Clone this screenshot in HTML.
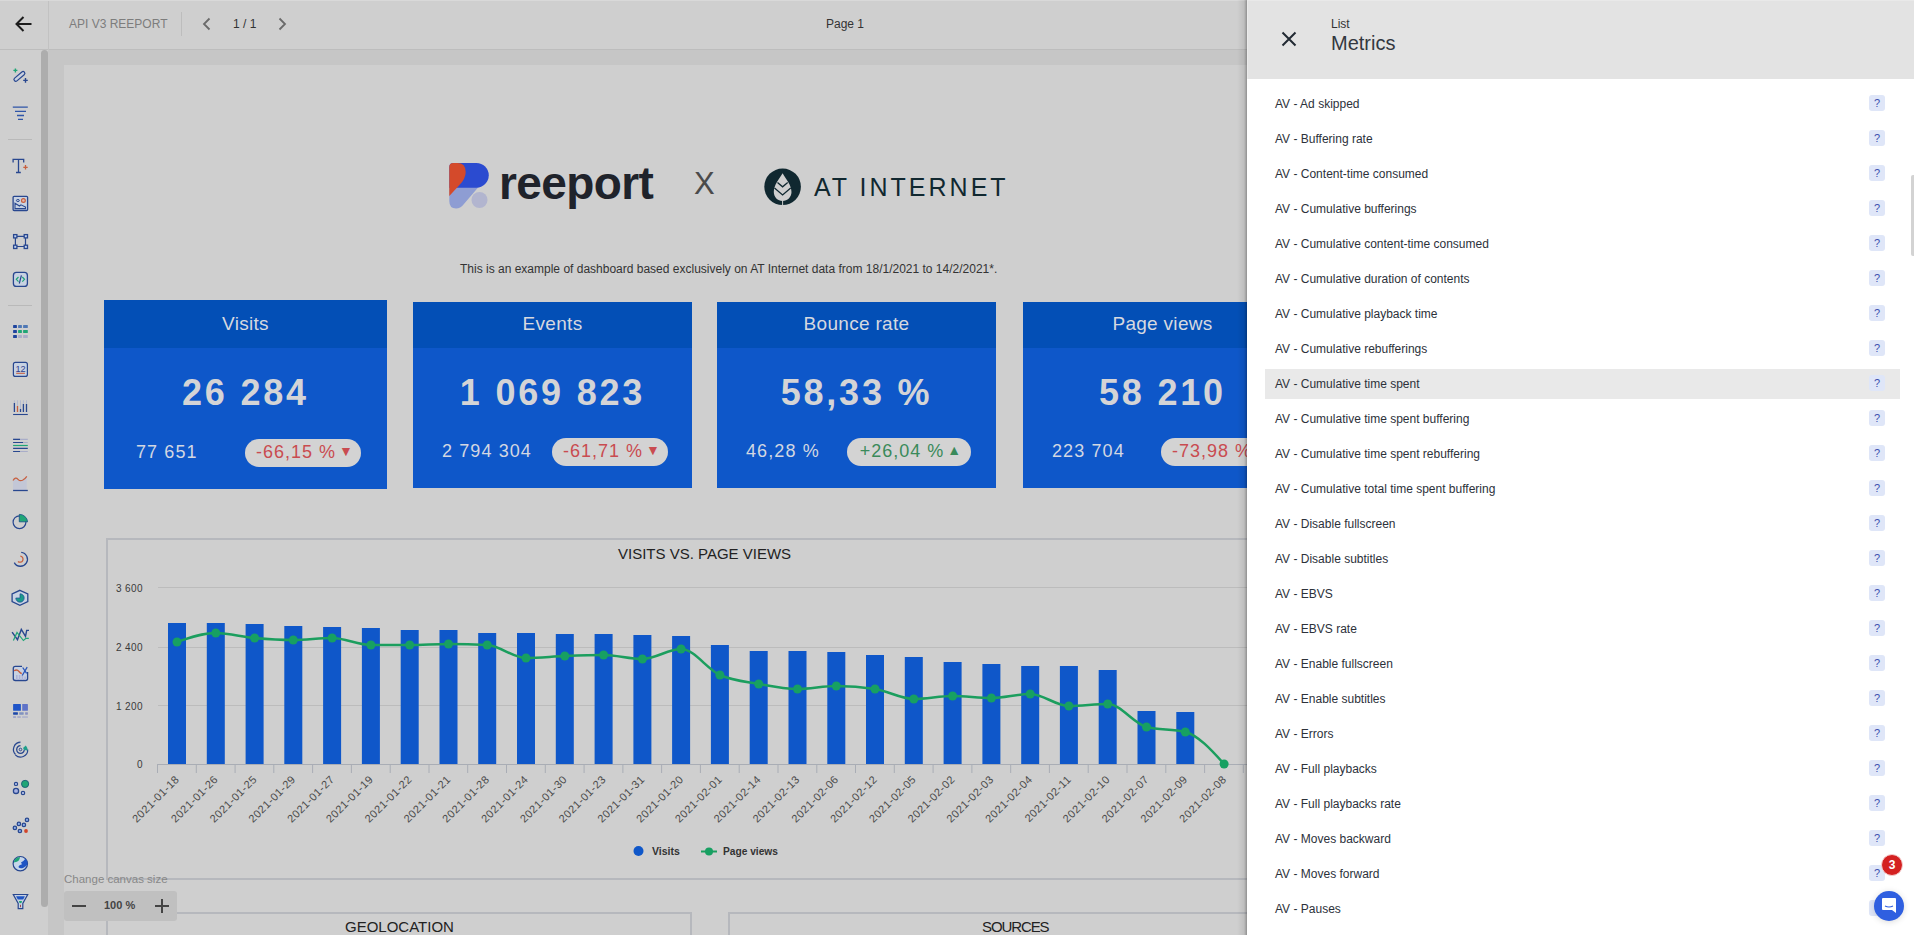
<!DOCTYPE html>
<html><head><meta charset="utf-8">
<style>
*{margin:0;padding:0;box-sizing:border-box}
html,body{width:1914px;height:935px;overflow:hidden;background:#cfcfcf;font-family:"Liberation Sans",sans-serif;position:relative}
.abs{position:absolute}
.card{position:absolute;top:302px;height:186px;background:#0e57c9;color:#d6d9e0}
.card .hd{position:absolute;left:0;top:0;right:0;height:46px;background:#034fb6;font-size:19px;text-align:center;line-height:47px;letter-spacing:0.3px}
.card .big{position:absolute;left:0;right:0;top:68px;text-align:center;font-size:36px;font-weight:bold;color:#d4d4d6;letter-spacing:2.8px}
.card .sub{position:absolute;top:141px;font-size:18px;color:#d3d7e2;letter-spacing:1.1px}
.card .pill{position:absolute;top:136px;height:28px;border-radius:14px;background:#d3d3d3;font-size:18px;line-height:25px;text-align:center;letter-spacing:1px;padding-left:3px}
.red{color:#c94b50}.grn{color:#3a8a5a}
.tri{font-size:14px;vertical-align:1.5px;letter-spacing:0;margin-left:3px}
.item{position:absolute;left:1265px;width:635px;height:30px;font-size:12px;color:#2c313a;line-height:30px;padding-left:10px}
.q{position:absolute;left:1869px;width:16px;height:16px;border-radius:3px;background:#dfe6f8;color:#3d4fae;font-size:11px;text-align:center;line-height:16px}
</style></head><body>
<!-- header -->
<div class="abs" style="left:0;top:0;width:1247px;height:50px;background:#cfcfcf;border-bottom:1px solid #bdbdbd"></div>
<div class="abs" style="left:48px;top:0;width:1px;height:50px;background:#c2c2c2"></div>
<svg class="abs" style="left:14px;top:14px" width="20" height="20" viewBox="0 0 20 20"><path d="M17.5 10H3 M9.5 3 L2.5 10 L9.5 17" fill="none" stroke="#1c1c1c" stroke-width="2"/></svg>
<div class="abs" style="left:69px;top:17px;font-size:12px;color:#7d7d7d">API V3 REEPORT</div>
<div class="abs" style="left:181px;top:12px;width:1px;height:24px;background:#bdbdbd"></div>
<svg class="abs" style="left:199.5px;top:15.5px" width="14" height="16" viewBox="0 0 14 16"><path d="M9.5 2.5 L4 8 L9.5 13.5" fill="none" stroke="#6a6a6a" stroke-width="1.8"/></svg>
<div class="abs" style="left:233px;top:17px;font-size:12px;color:#333">1 / 1</div>
<svg class="abs" style="left:275px;top:15.5px" width="14" height="16" viewBox="0 0 14 16"><path d="M4.5 2.5 L10 8 L4.5 13.5" fill="none" stroke="#6a6a6a" stroke-width="1.8"/></svg>
<div class="abs" style="left:826px;top:17px;font-size:12px;color:#333">Page 1</div>

<div class="abs" style="left:0;top:0;width:1247px;height:1px;background:#d9d9d9"></div>
<!-- sidebar -->
<div class="abs" style="left:0;top:50px;width:48px;height:885px;background:#cfcfcf"></div>
<div class="abs" style="left:41px;top:50px;width:7px;height:857px;background:#adadad;border-radius:3.5px"></div>
<div class="abs" style="left:8px;top:139px;width:24px;height:1px;background:#b9b9b9"></div>
<div class="abs" style="left:8px;top:305px;width:24px;height:1px;background:#b9b9b9"></div>

<!-- canvas -->
<div class="abs" style="left:48px;top:50px;width:1199px;height:885px;background:#c6c6c6"></div>
<div class="abs" style="left:64px;top:65px;width:1183px;height:870px;background:#cfcfcf"></div>
<!-- sidebar icons -->
<svg class="abs" style="left:8px;top:64px" width="24" height="24" viewBox="0 0 24 24" fill="none"><path d="M5.4,6.4 H9.4 M7.4,4.4 V8.4" stroke="#20a676" stroke-width="1.4"/>
<rect x="-6.55" y="-1.8" width="13.1" height="3.6" rx="1.8" transform="translate(11.4,12.45) rotate(-40.4)" stroke="#28478f" stroke-width="1.2" fill="#c9d0df"/>
<path d="M15.2,16.4 H19.8 M17.5,14.1 V18.7" stroke="#28478f" stroke-width="1.4"/></svg>
<svg class="abs" style="left:8px;top:101px" width="24" height="24" viewBox="0 0 24 24" fill="none"><path d="M4.8,6.2 H19.8 M7,10.4 H18 M9,14.5 H16 M10,18.4 H15" stroke="#2f55a8" stroke-width="1.3"/></svg>
<svg class="abs" style="left:8px;top:154px" width="24" height="24" viewBox="0 0 24 24" fill="none"><path d="M5.1,8.5 V5.4 H15.7 V8.5 M10.5,5.4 V18.5 M8,18.5 H12.8" stroke="#28478f" stroke-width="1.3" fill="none"/>
<path d="M15.3,13.3 H19.7 M17.5,11.1 V15.5" stroke="#c8603e" stroke-width="1.3"/></svg>
<svg class="abs" style="left:8px;top:191px" width="24" height="24" viewBox="0 0 24 24" fill="none"><rect x="5.1" y="5.3" width="14.5" height="14.2" rx="1" stroke="#28478f" stroke-width="1.3" fill="#c8d2e2"/>
<ellipse cx="9.9" cy="9.5" rx="1.5" ry="1" stroke="#28478f" stroke-width="1" fill="none"/>
<circle cx="15.4" cy="9.5" r="1.9" stroke="#c8603e" stroke-width="1.2" fill="#e3b8b0"/>
<path d="M7,12.3 L11.5,15 L13,13.8 L17.5,16 V17.6 H7 Z" stroke="#28478f" stroke-width="1.1" fill="none"/></svg>
<svg class="abs" style="left:8px;top:229px" width="24" height="24" viewBox="0 0 24 24" fill="none"><path d="M8.8,7.4 H16.2 M8.8,17.5 H16.2 M7.4,8.8 V16 M17.5,8.8 V16" stroke="#28478f" stroke-width="1.2"/>
<g stroke="#28478f" stroke-width="1.3" fill="#bfd0ee"><rect x="5.6" y="5.6" width="3.3" height="3.3"/><rect x="16.2" y="5.6" width="3.3" height="3.3"/><rect x="5.6" y="16.2" width="3.3" height="3.3"/><rect x="16.2" y="16.2" width="3.3" height="3.3"/></g></svg>
<svg class="abs" style="left:8px;top:267px" width="24" height="24" viewBox="0 0 24 24" fill="none"><rect x="5.4" y="5.4" width="14" height="14" rx="3" stroke="#28478f" stroke-width="1.3" fill="#c8d2e2"/>
<path d="M10.5,10 L8.3,12.3 L10.5,14.6 M14.3,10 L16.5,12.3 L14.3,14.6" stroke="#20a676" stroke-width="1.2" fill="none"/>
<path d="M13.4,8.3 L11.3,16.5" stroke="#28478f" stroke-width="1.2"/></svg>
<svg class="abs" style="left:8px;top:319px" width="24" height="24" viewBox="0 0 24 24" fill="none"><g><rect x="5.1" y="6" width="3.8" height="2.9" rx="0.5" fill="#1e449e"/><rect x="10.1" y="6" width="3.8" height="2.9" rx="0.5" fill="#4f78b5"/><rect x="15.1" y="6" width="4.7" height="2.9" rx="0.5" fill="#4f78b5"/>
<rect x="5.1" y="11" width="3.8" height="2.9" rx="0.5" fill="#1e449e"/><rect x="10.1" y="11" width="3.8" height="2.9" rx="0.5" fill="#20a676"/><rect x="15.1" y="11" width="4.7" height="2.9" rx="0.5" fill="#20a676"/>
<rect x="5.1" y="16" width="3.8" height="2.9" rx="0.5" fill="#1e449e"/><rect x="10.1" y="16" width="3.8" height="2.9" rx="0.5" fill="#a9adc8"/><rect x="15.1" y="16" width="4.7" height="2.9" rx="0.5" fill="#a9adc8"/></g></svg>
<svg class="abs" style="left:8px;top:357px" width="24" height="24" viewBox="0 0 24 24" fill="none"><rect x="5.4" y="5.4" width="14" height="14" rx="2" stroke="#28478f" stroke-width="1.2" fill="#c8d2e2"/>
<text x="12.6" y="14.8" text-anchor="middle" font-family="Liberation Sans" font-size="9.2" fill="#30418f">12</text>
<path d="M8.2,16.3 H16.9" stroke="#c8603e" stroke-width="1.1"/></svg>
<svg class="abs" style="left:8px;top:395px" width="24" height="24" viewBox="0 0 24 24" fill="none"><path d="M6.4,5.3 V17 M9.5,5.3 V17 M12.5,5.3 V17 M15.4,5.3 V17 M18.5,5.3 V17" stroke="#b3bad0" stroke-width="1"/>
<path d="M6.4,8 V17 M12.5,14 V17 M15.4,9 V17 M18.5,9 V17" stroke="#28478f" stroke-width="1.3"/>
<path d="M9.5,11 V17" stroke="#c8603e" stroke-width="1.3"/>
<path d="M5.1,19.5 H19.8" stroke="#28478f" stroke-width="1.1"/></svg>
<svg class="abs" style="left:8px;top:433px" width="24" height="24" viewBox="0 0 24 24" fill="none"><path d="M5.1,6.4 H19.8 M5.1,9.5 H19.8 M5.1,18.5 H19.8" stroke="#a9adc8" stroke-width="1.1"/>
<path d="M5.1,6.4 H12 M5.1,9.5 H15 M5.1,15.4 H19.8 M5.1,18.5 H12" stroke="#28478f" stroke-width="1.2"/>
<path d="M5.1,12.5 H19.8" stroke="#20a676" stroke-width="1.2"/></svg>
<svg class="abs" style="left:8px;top:471px" width="24" height="24" viewBox="0 0 24 24" fill="none"><path d="M5,9.5 Q7.5,5.5 10,8.3 Q12,10.5 14.5,9.3 Q17,8 18.8,5.3 V19 H5 Z" fill="#c3c7d6"/>
<path d="M5,9.5 Q7.5,5.5 10,8.3 Q12,10.5 14.5,9.3 Q17,8 18.8,5.3" stroke="#c8603e" stroke-width="1.2" fill="none"/>
<path d="M5.1,19.5 H19.8" stroke="#28478f" stroke-width="1.3"/></svg>
<svg class="abs" style="left:8px;top:509px" width="24" height="24" viewBox="0 0 24 24" fill="none"><circle cx="11.5" cy="13.2" r="6.4" stroke="#28478f" stroke-width="1.2" fill="none"/>
<path d="M11.3,12.8 V5.4 A8.2,8.2 0 0 1 19.6,12.8 Z" fill="#20a676" stroke="#1b5a86" stroke-width="0.9"/></svg>
<svg class="abs" style="left:8px;top:547px" width="24" height="24" viewBox="0 0 24 24" fill="none"><path d="M6.3,15.6 A7,7 0 1 0 13.2,5.3" stroke="#28478f" stroke-width="1.3" fill="none"/>
<path d="M10,14.4 A3,3 0 1 0 12.3,9.2" stroke="#c8603e" stroke-width="1.3" fill="none"/></svg>
<svg class="abs" style="left:8px;top:585px" width="24" height="24" viewBox="0 0 24 24" fill="none"><path d="M11.9,5.3 L19.8,8.9 V16.7 L11.9,20.3 L4.1,16.7 V8.9 Z" stroke="#28478f" stroke-width="1.3" fill="#c8d2e2"/>
<path d="M12,13 V8.8 A4.2,4.2 0 1 1 7.8,13 Z" fill="#1a9a8a" stroke="#1c4f96" stroke-width="0.7"/></svg>
<svg class="abs" style="left:8px;top:623px" width="24" height="24" viewBox="0 0 24 24" fill="none"><path d="M4.1,9.2 L9.5,16.7 L13.3,6.4 L17.5,13.3 L18.7,7.4 H21" stroke="#28478f" stroke-width="1.4" fill="none"/>
<path d="M5.4,17.5 L9,9.5 L15.4,17.5 L18,15.4 H20.8" stroke="#20a676" stroke-width="1.2" fill="none"/></svg>
<svg class="abs" style="left:8px;top:661px" width="24" height="24" viewBox="0 0 24 24" fill="none"><path d="M14,5.3 H7.3 Q5.3,5.3 5.3,7.3 V17.5 Q5.3,19.5 7.3,19.5 H17.6 Q19.6,19.5 19.6,17.5 V11" stroke="#28478f" stroke-width="1.3" fill="#c8d2e2"/>
<g fill="#aeb3d8"><rect x="8" y="14" width="1.6" height="5"/><rect x="10.8" y="14" width="1.6" height="5"/><rect x="13.6" y="14.5" width="1.6" height="4.5"/><rect x="16.4" y="15.5" width="1.4" height="3.5"/></g>
<path d="M6,9.8 Q9,8 11,10.5 Q12.5,12.5 13.8,12.5" stroke="#c8603e" stroke-width="1.3" fill="none"/>
<path d="M14.2,14.5 L19.2,6.2 M14.7,6.5 L18.6,12.3" stroke="#2a55b8" stroke-width="1.3"/></svg>
<svg class="abs" style="left:8px;top:699px" width="24" height="24" viewBox="0 0 24 24" fill="none"><rect x="5.1" y="5" width="7.8" height="6.8" rx="0.5" fill="#1f55c8"/><rect x="14.2" y="5" width="5.7" height="6.8" rx="0.5" fill="#5f73c8"/>
<rect x="5.1" y="13.2" width="4.8" height="2.5" rx="0.4" fill="#1d48a8"/><rect x="11.2" y="13.2" width="4.5" height="2.5" rx="0.4" fill="#8092c0"/><rect x="17.1" y="13.2" width="2.8" height="2.5" rx="0.4" fill="#8c92c0"/>
<rect x="5.1" y="17.2" width="2.8" height="1.7" fill="#9aa0c8"/><rect x="9.3" y="17.2" width="3.5" height="1.7" fill="#a7abc8"/><rect x="14.1" y="17.2" width="5.8" height="1.7" fill="#b0b4cc"/></svg>
<svg class="abs" style="left:8px;top:737px" width="24" height="24" viewBox="0 0 24 24" fill="none"><circle cx="12.5" cy="12.5" r="1.3" stroke="#28478f" stroke-width="1"/>
<path d="M12.5,8.7 A3.8,3.8 0 1 0 16.3,12.5" stroke="#28478f" stroke-width="1.3" fill="none"/>
<path d="M12.5,5.3 A7.2,7.2 0 0 0 7.5,17.5 M6.3,8.5 A7.5,7.5 0 0 1 12.5,5" stroke="#28478f" stroke-width="1.2" fill="none"/>
<path d="M7.3,17.8 A7.2,7.2 0 0 0 19.7,12.5" stroke="#28478f" stroke-width="1.2" fill="none"/>
<path d="M15,11 L17.8,8.5 A7,7 0 0 1 19.6,13.5 L16.3,13 Z" fill="#1f9f8a"/></svg>
<svg class="abs" style="left:8px;top:775px" width="24" height="24" viewBox="0 0 24 24" fill="none"><circle cx="8" cy="8.9" r="1.6" stroke="#28478f" stroke-width="1.2" fill="#c0ccee"/>
<circle cx="17.1" cy="8.9" r="3.6" fill="#20a676" stroke="#1a5a78" stroke-width="0.9"/>
<circle cx="8" cy="15.9" r="2.6" stroke="#28478f" stroke-width="1.3" fill="#a8b2e2"/>
<circle cx="15" cy="18" r="1.7" stroke="#28478f" stroke-width="1.2" fill="#c0ccee"/></svg>
<svg class="abs" style="left:8px;top:813px" width="24" height="24" viewBox="0 0 24 24" fill="none"><g stroke="#28478f" stroke-width="1.3" fill="#8eb0ea"><circle cx="19" cy="6.9" r="1.7"/><circle cx="10.9" cy="10.9" r="1.7"/><circle cx="15.9" cy="11.9" r="1.7"/><circle cx="6.9" cy="14.9" r="1.7"/><circle cx="11.9" cy="18" r="1.7"/></g>
<circle cx="18" cy="18" r="1.9" fill="#d2452a"/></svg>
<svg class="abs" style="left:8px;top:851px" width="24" height="24" viewBox="0 0 24 24" fill="none"><circle cx="12.3" cy="12.7" r="7.2" stroke="#28478f" stroke-width="1.2" fill="#c6d6ea"/>
<path d="M5.8,11.5 Q6.5,6.5 12,6 Q11.8,9.5 8.8,10.8 Z" fill="#20a676"/>
<path d="M13,11.5 Q16,10 17.5,7.6 Q19.6,10 19.6,13.5 Q18,15.5 15.5,16.8 Q12,18.2 10.3,16 Q11,14 14,13.3 Z" fill="#1f55c4"/></svg>
<svg class="abs" style="left:8px;top:889px" width="24" height="24" viewBox="0 0 24 24" fill="none"><path d="M5.3,5.5 H19.7 L14.8,14.5 V19.6 H10.2 V14.5 Z" stroke="#28478f" stroke-width="1.2" fill="#c8d2e2"/>
<path d="M8,7.3 H16.9 L15.2,10.6 H9.8 Z" fill="#1f55c4"/>
<path d="M11,12 H14 Q14,14.2 12.5,14.2 Q11,14.2 11,12 Z" fill="#20a676"/>
<rect x="12.1" y="15.8" width="0.9" height="2.4" fill="#9a3a3a"/></svg><!-- logo -->
<svg class="abs" style="left:440px;top:155px" width="60" height="60" viewBox="0 0 60 60">
  <circle cx="39.5" cy="45" r="8" fill="#b2b5cf"/>
  <path d="M9.3,32 H38.5 L23.5,49.5 Q20.5,53.5 16,53.5 Q9.3,53.5 9.3,46 Z" fill="#8e9dd3"/>
  <path d="M13.3,8 H36.4 A12.35,12.35 0 0 1 36.4,32.7 H9.3 V12 Q9.3,8 13.3,8 Z" fill="#2b4bd0"/>
  <path d="M13.3,8 H17.5 Q25.7,8 25.7,17 Q25.7,24 19,30.5 L9.3,41 V12 Q9.3,8 13.3,8 Z" fill="#d44a2b"/>
</svg>
<div class="abs" id="reep" style="left:499px;top:156px;font-size:46px;font-weight:bold;color:#1f232b;letter-spacing:-0.6px">reeport</div>
<div class="abs" style="left:694px;top:165px;font-size:32px;color:#4b4b4b;transform:scaleX(0.97);transform-origin:0 0">X</div>
<svg class="abs" style="left:764px;top:168px" width="38" height="38" viewBox="0 0 38 38">
  <circle cx="18.6" cy="18.8" r="18.3" fill="#102830"/>
  <path d="M18.6,5.2 C22,11 27.5,17 27.5,24 C27.5,29 23.5,33 18.6,33 C13.7,33 9.8,29 9.8,24 C9.8,17 15,11 18.6,5.2 Z" fill="#cfcfcf"/>
  <rect x="18.1" y="31" width="1" height="7" fill="#cfcfcf"/>
  <path d="M13.5,14.5 L18.6,18.8 L23.7,14.5 M10.5,20 L18.6,27 L26.7,20" fill="none" stroke="#102830" stroke-width="1.3"/>
</svg>
<div class="abs" style="left:814px;top:173px;font-size:25px;color:#112830;letter-spacing:3px">AT INTERNET</div>
<div class="abs" id="subt" style="left:460px;top:262px;font-size:12px;color:#333">This is an example of dashboard based exclusively on AT Internet data from 18/1/2021 to 14/2/2021*.</div>

<!-- cards -->
<div class="card" style="left:104px;top:300px;width:283px;height:189px">
  <div class="hd" style="height:48px;line-height:48px">Visits</div>
  <div class="big" style="top:72px">26 284</div>
  <div class="sub" style="left:32px;top:141.5px">77 651</div>
  <div class="pill red" style="left:141px;top:139px;width:116px">-66,15 %<span class="tri">&#9660;</span></div>
</div>
<div class="card" style="left:413px;width:279px">
  <div class="hd" style="line-height:43px">Events</div>
  <div class="big" style="top:70px">1 069 823</div>
  <div class="sub" style="left:29px;top:138.5px">2 794 304</div>
  <div class="pill red" style="left:139px;width:116px">-61,71 %<span class="tri">&#9660;</span></div>
</div>
<div class="card" style="left:717px;width:279px">
  <div class="hd" style="line-height:43px">Bounce rate</div>
  <div class="big" style="top:70px">58,33 %</div>
  <div class="sub" style="left:29px;top:138.5px">46,28 %</div>
  <div class="pill grn" style="left:130px;width:124px">+26,04 %<span class="tri">&#9650;</span></div>
</div>
<div class="card" style="left:1023px;width:279px">
  <div class="hd" style="line-height:43px">Page views</div>
  <div class="big" style="top:70px">58 210</div>
  <div class="sub" style="left:29px;top:138.5px">223 704</div>
  <div class="pill red" style="left:138px;width:116px">-73,98 %<span class="tri">&#9660;</span></div>
</div>

<!-- chart container -->
<div class="abs" style="left:106px;top:538px;width:1200px;height:342px;border:2px solid #b6b8bd"></div>
<div class="abs" style="left:618px;top:544.5px;font-size:15px;color:#222">VISITS VS. PAGE VIEWS</div>
<svg class="abs" style="left:0;top:0" width="1914" height="935">
<line x1="158" y1="587.5" x2="1247" y2="587.5" stroke="#bcbcbc" stroke-width="1"/>
<line x1="158" y1="647.5" x2="1247" y2="647.5" stroke="#bcbcbc" stroke-width="1"/>
<line x1="158" y1="705.5" x2="1247" y2="705.5" stroke="#bcbcbc" stroke-width="1"/>
<line x1="157" y1="764.5" x2="1247" y2="764.5" stroke="#a9adb5" stroke-width="1"/>
<line x1="157.5" y1="764" x2="157.5" y2="773" stroke="#a9adb5" stroke-width="1"/>
<line x1="196.3" y1="764" x2="196.3" y2="773" stroke="#a9adb5" stroke-width="1"/>
<line x1="235.1" y1="764" x2="235.1" y2="773" stroke="#a9adb5" stroke-width="1"/>
<line x1="273.8" y1="764" x2="273.8" y2="773" stroke="#a9adb5" stroke-width="1"/>
<line x1="312.6" y1="764" x2="312.6" y2="773" stroke="#a9adb5" stroke-width="1"/>
<line x1="351.4" y1="764" x2="351.4" y2="773" stroke="#a9adb5" stroke-width="1"/>
<line x1="390.2" y1="764" x2="390.2" y2="773" stroke="#a9adb5" stroke-width="1"/>
<line x1="429.0" y1="764" x2="429.0" y2="773" stroke="#a9adb5" stroke-width="1"/>
<line x1="467.7" y1="764" x2="467.7" y2="773" stroke="#a9adb5" stroke-width="1"/>
<line x1="506.5" y1="764" x2="506.5" y2="773" stroke="#a9adb5" stroke-width="1"/>
<line x1="545.3" y1="764" x2="545.3" y2="773" stroke="#a9adb5" stroke-width="1"/>
<line x1="584.1" y1="764" x2="584.1" y2="773" stroke="#a9adb5" stroke-width="1"/>
<line x1="622.9" y1="764" x2="622.9" y2="773" stroke="#a9adb5" stroke-width="1"/>
<line x1="661.6" y1="764" x2="661.6" y2="773" stroke="#a9adb5" stroke-width="1"/>
<line x1="700.4" y1="764" x2="700.4" y2="773" stroke="#a9adb5" stroke-width="1"/>
<line x1="739.2" y1="764" x2="739.2" y2="773" stroke="#a9adb5" stroke-width="1"/>
<line x1="778.0" y1="764" x2="778.0" y2="773" stroke="#a9adb5" stroke-width="1"/>
<line x1="816.8" y1="764" x2="816.8" y2="773" stroke="#a9adb5" stroke-width="1"/>
<line x1="855.5" y1="764" x2="855.5" y2="773" stroke="#a9adb5" stroke-width="1"/>
<line x1="894.3" y1="764" x2="894.3" y2="773" stroke="#a9adb5" stroke-width="1"/>
<line x1="933.1" y1="764" x2="933.1" y2="773" stroke="#a9adb5" stroke-width="1"/>
<line x1="971.9" y1="764" x2="971.9" y2="773" stroke="#a9adb5" stroke-width="1"/>
<line x1="1010.7" y1="764" x2="1010.7" y2="773" stroke="#a9adb5" stroke-width="1"/>
<line x1="1049.4" y1="764" x2="1049.4" y2="773" stroke="#a9adb5" stroke-width="1"/>
<line x1="1088.2" y1="764" x2="1088.2" y2="773" stroke="#a9adb5" stroke-width="1"/>
<line x1="1127.0" y1="764" x2="1127.0" y2="773" stroke="#a9adb5" stroke-width="1"/>
<line x1="1165.8" y1="764" x2="1165.8" y2="773" stroke="#a9adb5" stroke-width="1"/>
<line x1="1204.6" y1="764" x2="1204.6" y2="773" stroke="#a9adb5" stroke-width="1"/>
<line x1="1243.3" y1="764" x2="1243.3" y2="773" stroke="#a9adb5" stroke-width="1"/>
<rect x="168.0" y="623" width="18" height="141" fill="#0f57c9"/>
<rect x="206.8" y="623" width="18" height="141" fill="#0f57c9"/>
<rect x="245.6" y="624" width="18" height="140" fill="#0f57c9"/>
<rect x="284.3" y="626" width="18" height="138" fill="#0f57c9"/>
<rect x="323.1" y="627" width="18" height="137" fill="#0f57c9"/>
<rect x="361.9" y="628" width="18" height="136" fill="#0f57c9"/>
<rect x="400.7" y="630" width="18" height="134" fill="#0f57c9"/>
<rect x="439.5" y="630" width="18" height="134" fill="#0f57c9"/>
<rect x="478.2" y="633" width="18" height="131" fill="#0f57c9"/>
<rect x="517.0" y="633" width="18" height="131" fill="#0f57c9"/>
<rect x="555.8" y="634" width="18" height="130" fill="#0f57c9"/>
<rect x="594.6" y="634" width="18" height="130" fill="#0f57c9"/>
<rect x="633.4" y="635" width="18" height="129" fill="#0f57c9"/>
<rect x="672.1" y="636" width="18" height="128" fill="#0f57c9"/>
<rect x="710.9" y="645" width="18" height="119" fill="#0f57c9"/>
<rect x="749.7" y="651" width="18" height="113" fill="#0f57c9"/>
<rect x="788.5" y="651" width="18" height="113" fill="#0f57c9"/>
<rect x="827.3" y="652" width="18" height="112" fill="#0f57c9"/>
<rect x="866.0" y="655" width="18" height="109" fill="#0f57c9"/>
<rect x="904.8" y="657" width="18" height="107" fill="#0f57c9"/>
<rect x="943.6" y="662" width="18" height="102" fill="#0f57c9"/>
<rect x="982.4" y="664" width="18" height="100" fill="#0f57c9"/>
<rect x="1021.2" y="666" width="18" height="98" fill="#0f57c9"/>
<rect x="1059.9" y="666" width="18" height="98" fill="#0f57c9"/>
<rect x="1098.7" y="670" width="18" height="94" fill="#0f57c9"/>
<rect x="1137.5" y="711" width="18" height="53" fill="#0f57c9"/>
<rect x="1176.3" y="712" width="18" height="52" fill="#0f57c9"/>
<path d="M177.0,642.0 C189.9,637.50 202.9,633.00 215.8,633.0 C228.7,633.00 241.6,636.83 254.6,638.0 C267.5,639.17 280.4,640.00 293.3,640.0 C306.3,640.00 319.2,638.00 332.1,638.0 C345.0,638.00 358.0,645.00 370.9,645.0 C383.8,645.00 396.8,645.00 409.7,645.0 C422.6,645.00 435.5,644.00 448.5,644.0 C461.4,644.00 474.3,644.33 487.2,645.0 C500.2,645.67 513.1,658.00 526.0,658.0 C538.9,658.00 551.9,656.50 564.8,656.0 C577.7,655.50 590.7,655.00 603.6,655.0 C616.5,655.00 629.4,659.00 642.4,659.0 C655.3,659.00 668.2,649.00 681.1,649.0 C694.1,649.00 707.0,669.17 719.9,675.0 C732.8,680.83 745.8,681.67 758.7,684.0 C771.6,686.33 784.6,689.00 797.5,689.0 C810.4,689.00 823.3,686.00 836.3,686.0 C849.2,686.00 862.1,687.00 875.0,689.0 C888.0,691.00 900.9,699.00 913.8,699.0 C926.7,699.00 939.7,696.00 952.6,696.0 C965.5,696.00 978.5,698.00 991.4,698.0 C1004.3,698.00 1017.2,694.00 1030.2,694.0 C1043.1,694.00 1056.0,706.00 1068.9,706.0 C1081.9,706.00 1094.8,704.00 1107.7,704.0 C1120.6,704.00 1133.6,723.67 1146.5,727.0 C1159.4,730.33 1172.4,728.67 1185.3,732.0 C1198.2,735.33 1211.1,749.67 1224.1,764.0" fill="none" stroke="#1b9e5e" stroke-width="2.5"/>
<circle cx="177.0" cy="642" r="4.5" fill="#17a062"/>
<circle cx="215.8" cy="633" r="4.5" fill="#17a062"/>
<circle cx="254.6" cy="638" r="4.5" fill="#17a062"/>
<circle cx="293.3" cy="640" r="4.5" fill="#17a062"/>
<circle cx="332.1" cy="638" r="4.5" fill="#17a062"/>
<circle cx="370.9" cy="645" r="4.5" fill="#17a062"/>
<circle cx="409.7" cy="645" r="4.5" fill="#17a062"/>
<circle cx="448.5" cy="644" r="4.5" fill="#17a062"/>
<circle cx="487.2" cy="645" r="4.5" fill="#17a062"/>
<circle cx="526.0" cy="658" r="4.5" fill="#17a062"/>
<circle cx="564.8" cy="656" r="4.5" fill="#17a062"/>
<circle cx="603.6" cy="655" r="4.5" fill="#17a062"/>
<circle cx="642.4" cy="659" r="4.5" fill="#17a062"/>
<circle cx="681.1" cy="649" r="4.5" fill="#17a062"/>
<circle cx="719.9" cy="675" r="4.5" fill="#17a062"/>
<circle cx="758.7" cy="684" r="4.5" fill="#17a062"/>
<circle cx="797.5" cy="689" r="4.5" fill="#17a062"/>
<circle cx="836.3" cy="686" r="4.5" fill="#17a062"/>
<circle cx="875.0" cy="689" r="4.5" fill="#17a062"/>
<circle cx="913.8" cy="699" r="4.5" fill="#17a062"/>
<circle cx="952.6" cy="696" r="4.5" fill="#17a062"/>
<circle cx="991.4" cy="698" r="4.5" fill="#17a062"/>
<circle cx="1030.2" cy="694" r="4.5" fill="#17a062"/>
<circle cx="1068.9" cy="706" r="4.5" fill="#17a062"/>
<circle cx="1107.7" cy="704" r="4.5" fill="#17a062"/>
<circle cx="1146.5" cy="727" r="4.5" fill="#17a062"/>
<circle cx="1185.3" cy="732" r="4.5" fill="#17a062"/>
<circle cx="1224.1" cy="764" r="4.5" fill="#17a062"/>
<text x="143" y="591.5" text-anchor="end" font-family="Liberation Sans" font-size="10" letter-spacing="0.4" fill="#3a3a3a">3 600</text>
<text x="143" y="651" text-anchor="end" font-family="Liberation Sans" font-size="10" letter-spacing="0.4" fill="#3a3a3a">2 400</text>
<text x="143" y="709.5" text-anchor="end" font-family="Liberation Sans" font-size="10" letter-spacing="0.4" fill="#3a3a3a">1 200</text>
<text x="143" y="768" text-anchor="end" font-family="Liberation Sans" font-size="10" letter-spacing="0.4" fill="#3a3a3a">0</text>
<text transform="translate(180.0,780) rotate(-45)" text-anchor="end" font-family="Liberation Sans" font-size="11" letter-spacing="0.5" fill="#4a4a4a">2021-01-18</text>
<text transform="translate(218.8,780) rotate(-45)" text-anchor="end" font-family="Liberation Sans" font-size="11" letter-spacing="0.5" fill="#4a4a4a">2021-01-26</text>
<text transform="translate(257.6,780) rotate(-45)" text-anchor="end" font-family="Liberation Sans" font-size="11" letter-spacing="0.5" fill="#4a4a4a">2021-01-25</text>
<text transform="translate(296.3,780) rotate(-45)" text-anchor="end" font-family="Liberation Sans" font-size="11" letter-spacing="0.5" fill="#4a4a4a">2021-01-29</text>
<text transform="translate(335.1,780) rotate(-45)" text-anchor="end" font-family="Liberation Sans" font-size="11" letter-spacing="0.5" fill="#4a4a4a">2021-01-27</text>
<text transform="translate(373.9,780) rotate(-45)" text-anchor="end" font-family="Liberation Sans" font-size="11" letter-spacing="0.5" fill="#4a4a4a">2021-01-19</text>
<text transform="translate(412.7,780) rotate(-45)" text-anchor="end" font-family="Liberation Sans" font-size="11" letter-spacing="0.5" fill="#4a4a4a">2021-01-22</text>
<text transform="translate(451.5,780) rotate(-45)" text-anchor="end" font-family="Liberation Sans" font-size="11" letter-spacing="0.5" fill="#4a4a4a">2021-01-21</text>
<text transform="translate(490.2,780) rotate(-45)" text-anchor="end" font-family="Liberation Sans" font-size="11" letter-spacing="0.5" fill="#4a4a4a">2021-01-28</text>
<text transform="translate(529.0,780) rotate(-45)" text-anchor="end" font-family="Liberation Sans" font-size="11" letter-spacing="0.5" fill="#4a4a4a">2021-01-24</text>
<text transform="translate(567.8,780) rotate(-45)" text-anchor="end" font-family="Liberation Sans" font-size="11" letter-spacing="0.5" fill="#4a4a4a">2021-01-30</text>
<text transform="translate(606.6,780) rotate(-45)" text-anchor="end" font-family="Liberation Sans" font-size="11" letter-spacing="0.5" fill="#4a4a4a">2021-01-23</text>
<text transform="translate(645.4,780) rotate(-45)" text-anchor="end" font-family="Liberation Sans" font-size="11" letter-spacing="0.5" fill="#4a4a4a">2021-01-31</text>
<text transform="translate(684.1,780) rotate(-45)" text-anchor="end" font-family="Liberation Sans" font-size="11" letter-spacing="0.5" fill="#4a4a4a">2021-01-20</text>
<text transform="translate(722.9,780) rotate(-45)" text-anchor="end" font-family="Liberation Sans" font-size="11" letter-spacing="0.5" fill="#4a4a4a">2021-02-01</text>
<text transform="translate(761.7,780) rotate(-45)" text-anchor="end" font-family="Liberation Sans" font-size="11" letter-spacing="0.5" fill="#4a4a4a">2021-02-14</text>
<text transform="translate(800.5,780) rotate(-45)" text-anchor="end" font-family="Liberation Sans" font-size="11" letter-spacing="0.5" fill="#4a4a4a">2021-02-13</text>
<text transform="translate(839.3,780) rotate(-45)" text-anchor="end" font-family="Liberation Sans" font-size="11" letter-spacing="0.5" fill="#4a4a4a">2021-02-06</text>
<text transform="translate(878.0,780) rotate(-45)" text-anchor="end" font-family="Liberation Sans" font-size="11" letter-spacing="0.5" fill="#4a4a4a">2021-02-12</text>
<text transform="translate(916.8,780) rotate(-45)" text-anchor="end" font-family="Liberation Sans" font-size="11" letter-spacing="0.5" fill="#4a4a4a">2021-02-05</text>
<text transform="translate(955.6,780) rotate(-45)" text-anchor="end" font-family="Liberation Sans" font-size="11" letter-spacing="0.5" fill="#4a4a4a">2021-02-02</text>
<text transform="translate(994.4,780) rotate(-45)" text-anchor="end" font-family="Liberation Sans" font-size="11" letter-spacing="0.5" fill="#4a4a4a">2021-02-03</text>
<text transform="translate(1033.2,780) rotate(-45)" text-anchor="end" font-family="Liberation Sans" font-size="11" letter-spacing="0.5" fill="#4a4a4a">2021-02-04</text>
<text transform="translate(1071.9,780) rotate(-45)" text-anchor="end" font-family="Liberation Sans" font-size="11" letter-spacing="0.5" fill="#4a4a4a">2021-02-11</text>
<text transform="translate(1110.7,780) rotate(-45)" text-anchor="end" font-family="Liberation Sans" font-size="11" letter-spacing="0.5" fill="#4a4a4a">2021-02-10</text>
<text transform="translate(1149.5,780) rotate(-45)" text-anchor="end" font-family="Liberation Sans" font-size="11" letter-spacing="0.5" fill="#4a4a4a">2021-02-07</text>
<text transform="translate(1188.3,780) rotate(-45)" text-anchor="end" font-family="Liberation Sans" font-size="11" letter-spacing="0.5" fill="#4a4a4a">2021-02-09</text>
<text transform="translate(1227.1,780) rotate(-45)" text-anchor="end" font-family="Liberation Sans" font-size="11" letter-spacing="0.5" fill="#4a4a4a">2021-02-08</text>
<circle cx="638.5" cy="851" r="5" fill="#0f57c9"/>
<text x="652" y="855" font-family="Liberation Sans" font-size="10.5" font-weight="bold" fill="#333">Visits</text>
<line x1="701" y1="851.5" x2="717" y2="851.5" stroke="#1b9e5e" stroke-width="2"/><circle cx="709" cy="851.5" r="4" fill="#17a062"/>
<text x="723" y="855" font-family="Liberation Sans" font-size="10.2" font-weight="bold" fill="#333">Page views</text>
</svg><!-- bottom containers -->
<div class="abs" style="left:106px;top:912px;width:586px;height:40px;border:2px solid #b6b8bd"></div>
<div class="abs" style="left:728px;top:912px;width:600px;height:40px;border:2px solid #b6b8bd"></div>
<div class="abs" style="left:345px;top:918px;font-size:15px;color:#222">GEOLOCATION</div>
<div class="abs" style="left:982px;top:918px;font-size:15px;color:#222;letter-spacing:-1.1px">SOURCES</div>
<!-- zoom control -->
<div class="abs" style="left:64px;top:872.5px;font-size:11.5px;color:#888">Change canvas size</div>
<div class="abs" style="left:64px;top:891px;width:113px;height:30px;background:#c0c0c0;border-radius:3px"></div>
<div class="abs" style="left:72px;top:905px;width:14px;height:2px;background:#444"></div>
<div class="abs" style="left:104px;top:899px;font-size:11px;font-weight:bold;color:#444">100 %</div>
<div class="abs" style="left:155px;top:905px;width:14px;height:2px;background:#444"></div>
<div class="abs" style="left:161px;top:899px;width:2px;height:14px;background:#444"></div>
<!-- panel -->
<div class="abs" style="left:1237px;top:0;width:10px;height:935px;background:linear-gradient(to right,rgba(0,0,0,0),rgba(0,0,0,0.08) 70%,rgba(0,0,0,0.3))"></div>
<div class="abs" style="left:1247px;top:0;width:667px;height:935px;background:#fff"></div>
<div class="abs" style="left:1247px;top:0;width:667px;height:79px;background:#e3e3e3"></div>
<div class="abs" style="left:1247px;top:0;width:667px;height:1px;background:#e9e9e9"></div><div class="abs" style="left:1247px;top:0;width:1px;height:79px;background:#ebebeb"></div>
<svg class="abs" style="left:1281px;top:31px" width="16" height="16" viewBox="0 0 16 16"><path d="M1.5 1.5 L14.5 14.5 M14.5 1.5 L1.5 14.5" stroke="#222a33" stroke-width="2"/></svg>
<div class="abs" style="left:1331px;top:17px;font-size:12px;color:#333">List</div>
<div class="abs" style="left:1331px;top:32px;font-size:20px;color:#333840">Metrics</div>
<div class="abs" style="left:1265px;top:369px;width:635px;height:30px;background:#e9e9e9"></div>
<div class="item" style="top:88.5px">AV - Ad skipped</div>
<div class="q" style="top:95px">?</div>
<div class="item" style="top:123.5px">AV - Buffering rate</div>
<div class="q" style="top:130px">?</div>
<div class="item" style="top:158.5px">AV - Content-time consumed</div>
<div class="q" style="top:165px">?</div>
<div class="item" style="top:193.5px">AV - Cumulative bufferings</div>
<div class="q" style="top:200px">?</div>
<div class="item" style="top:228.5px">AV - Cumulative content-time consumed</div>
<div class="q" style="top:235px">?</div>
<div class="item" style="top:263.5px">AV - Cumulative duration of contents</div>
<div class="q" style="top:270px">?</div>
<div class="item" style="top:298.5px">AV - Cumulative playback time</div>
<div class="q" style="top:305px">?</div>
<div class="item" style="top:333.5px">AV - Cumulative rebufferings</div>
<div class="q" style="top:340px">?</div>
<div class="item" style="top:368.5px">AV - Cumulative time spent</div>
<div class="q" style="top:375px">?</div>
<div class="item" style="top:403.5px">AV - Cumulative time spent buffering</div>
<div class="q" style="top:410px">?</div>
<div class="item" style="top:438.5px">AV - Cumulative time spent rebuffering</div>
<div class="q" style="top:445px">?</div>
<div class="item" style="top:473.5px">AV - Cumulative total time spent buffering</div>
<div class="q" style="top:480px">?</div>
<div class="item" style="top:508.5px">AV - Disable fullscreen</div>
<div class="q" style="top:515px">?</div>
<div class="item" style="top:543.5px">AV - Disable subtitles</div>
<div class="q" style="top:550px">?</div>
<div class="item" style="top:578.5px">AV - EBVS</div>
<div class="q" style="top:585px">?</div>
<div class="item" style="top:613.5px">AV - EBVS rate</div>
<div class="q" style="top:620px">?</div>
<div class="item" style="top:648.5px">AV - Enable fullscreen</div>
<div class="q" style="top:655px">?</div>
<div class="item" style="top:683.5px">AV - Enable subtitles</div>
<div class="q" style="top:690px">?</div>
<div class="item" style="top:718.5px">AV - Errors</div>
<div class="q" style="top:725px">?</div>
<div class="item" style="top:753.5px">AV - Full playbacks</div>
<div class="q" style="top:760px">?</div>
<div class="item" style="top:788.5px">AV - Full playbacks rate</div>
<div class="q" style="top:795px">?</div>
<div class="item" style="top:823.5px">AV - Moves backward</div>
<div class="q" style="top:830px">?</div>
<div class="item" style="top:858.5px">AV - Moves forward</div>
<div class="q" style="top:865px">?</div>
<div class="item" style="top:893.5px">AV - Pauses</div>
<div class="q" style="top:900px">?</div>
<div class="abs" style="left:1911px;top:175px;width:3px;height:81px;background:#d3d3d3;border-radius:2px 0 0 2px"></div>
<div class="abs" style="left:1874px;top:891px;width:30px;height:30px;border-radius:50%;background:#2f5fe0;box-shadow:0 1px 6px rgba(0,0,0,0.15)"></div>
<svg class="abs" style="left:1881px;top:897px" width="16" height="17" viewBox="0 0 16 17"><path d="M2 1 H14 Q15 1 15 2 V16 L11 13 H2 Q1 13 1 12 V2 Q1 1 2 1 Z" fill="#fff"/><path d="M4 9 Q8 11 12 9" fill="none" stroke="#2f5fe0" stroke-width="1.2"/></svg>
<div class="abs" style="left:1881px;top:854px;width:22px;height:22px;border-radius:50%;background:#d42121;border:1px solid #f4d0d0;color:#fff;font-size:12px;font-weight:bold;text-align:center;line-height:20px">3</div></body></html>
